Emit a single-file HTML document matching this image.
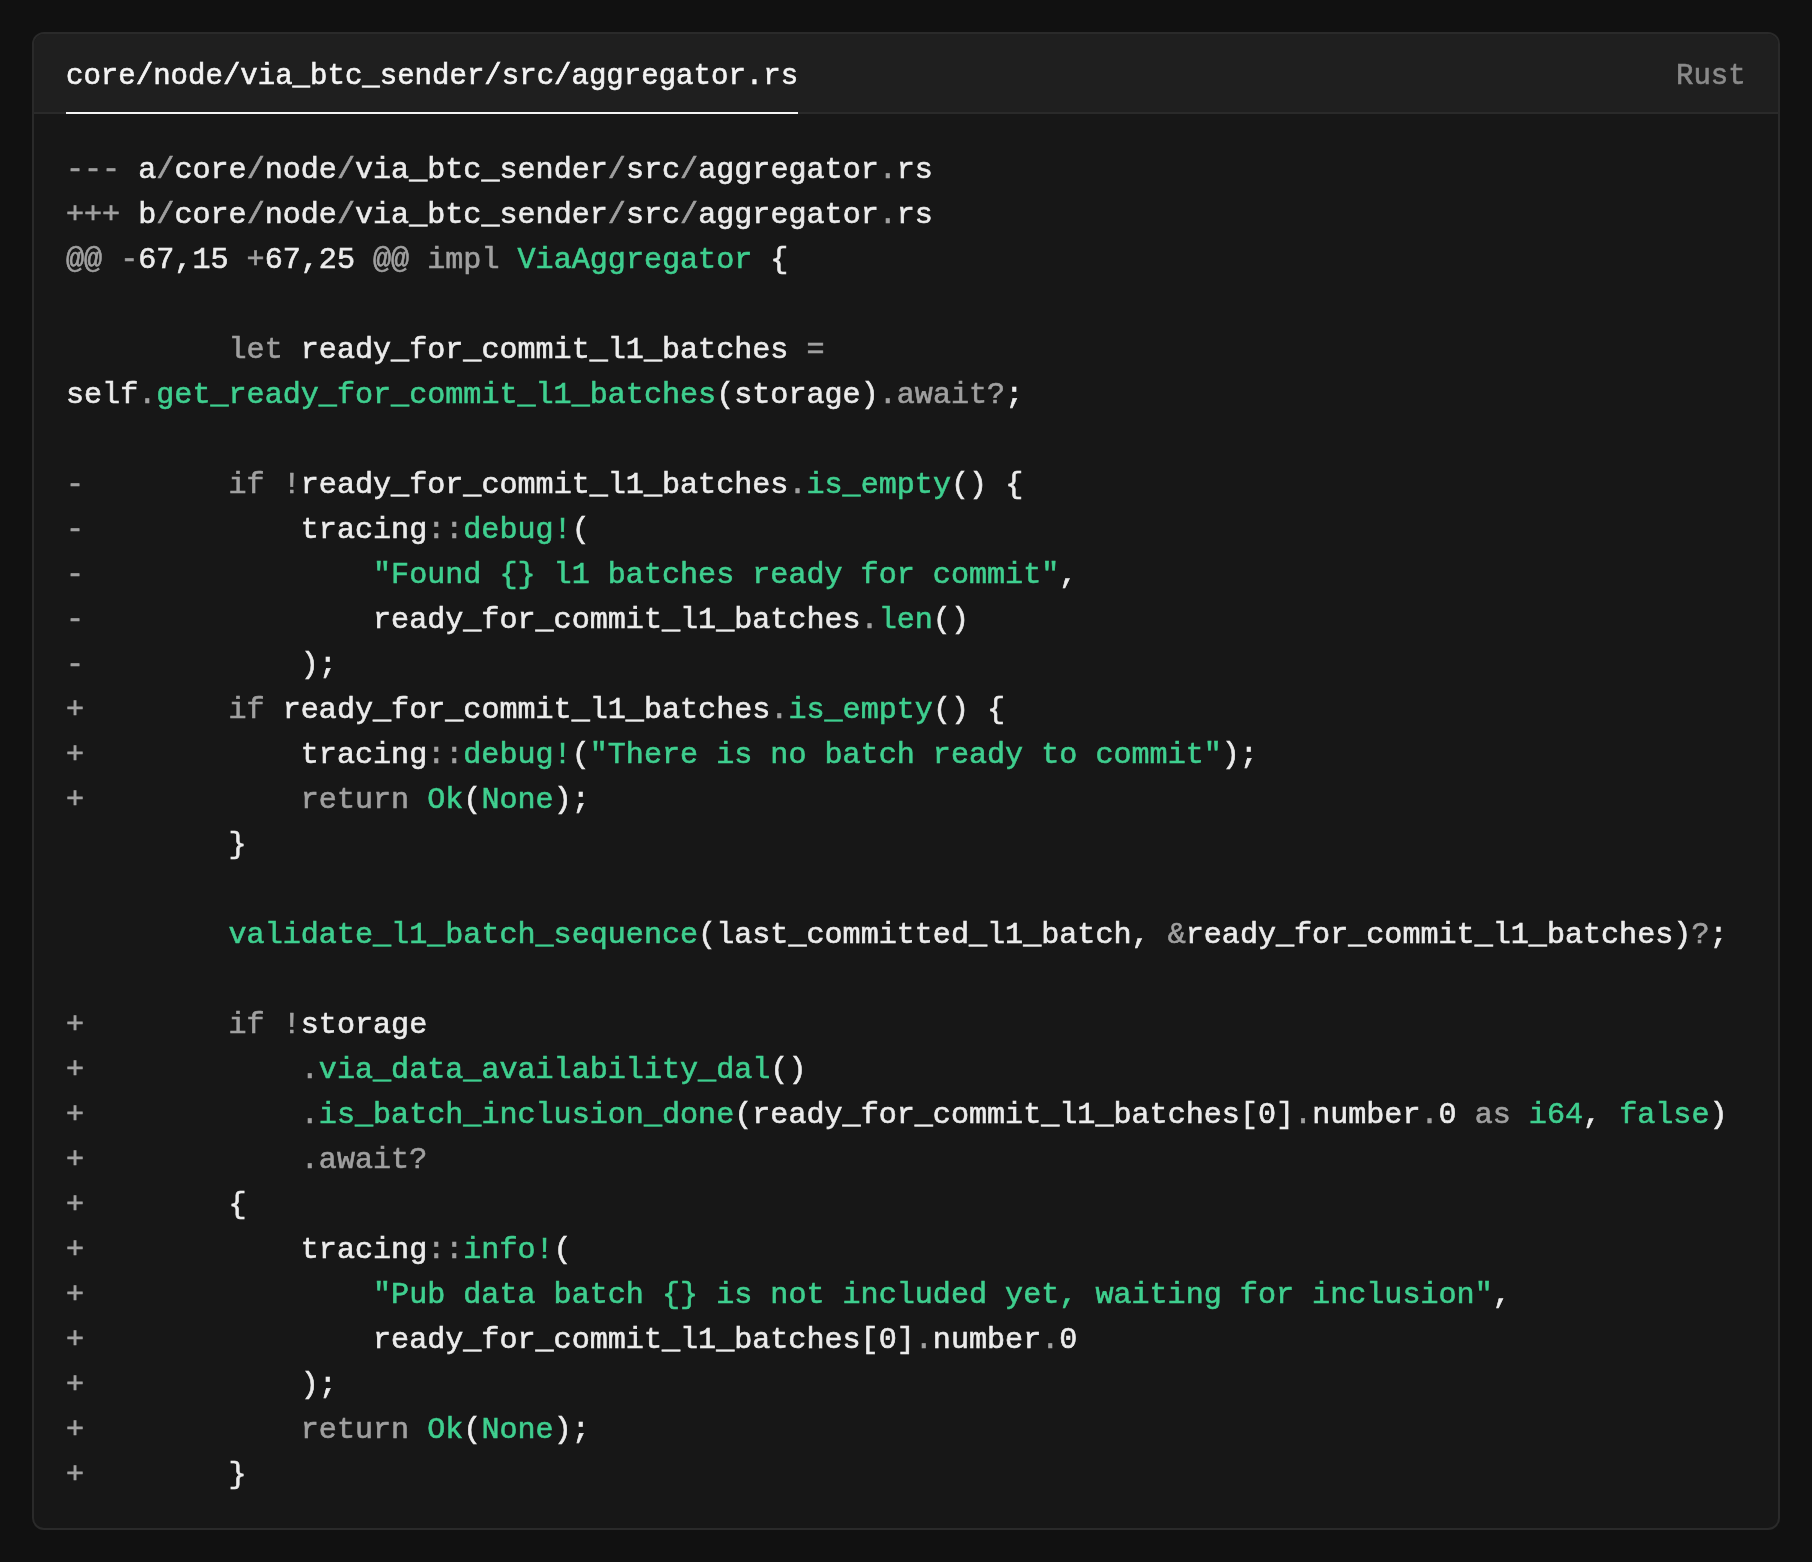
<!DOCTYPE html>
<html><head><meta charset="utf-8">
<style>
html,body{margin:0;padding:0;}
body{width:1812px;height:1562px;background:#111111;position:relative;overflow:hidden;font-family:"Liberation Mono",monospace;}
.box{position:absolute;left:32px;top:32px;width:1744px;height:1494px;border:2px solid #2a2a2a;border-radius:12px;background:#171717;overflow:hidden;}
.hd{position:absolute;left:0;top:0;width:1744px;height:78px;background:#1f1f1f;border-bottom:2px solid #2a2a2a;}
.tab{will-change:transform;-webkit-text-stroke:0.6px;position:absolute;left:32px;top:4px;height:78px;line-height:78px;font-size:29.05px;color:#f4f4f4;white-space:pre;}
.ul{position:absolute;left:32px;top:78px;width:732px;height:2px;background:#f4f4f4;}
.lang{will-change:transform;-webkit-text-stroke:0.6px;position:absolute;right:32px;top:4px;height:78px;line-height:78px;font-size:29px;color:#8a8a8a;}
.code{will-change:transform;-webkit-text-stroke:0.6px;position:absolute;left:32px;top:114px;font-size:30.1px;line-height:45px;color:#ececec;}
.l{height:45px;white-space:pre;}
.g{color:#a0a0a0}
.k{color:#a0a0a0}
.m{color:#a0a0a0}
.s{color:#3fcf8f}
</style></head><body>
<div class="box">
<div class="hd"></div>
<div class="tab">core/node/via_btc_sender/src/aggregator.rs</div>
<div class="ul"></div>
<div class="lang">Rust</div>
<div class="code">
<div class="l"><span class="m">---</span> a<span class="g">/</span>core<span class="g">/</span>node<span class="g">/</span>via_btc_sender<span class="g">/</span>src<span class="g">/</span>aggregator<span class="g">.</span>rs</div>
<div class="l"><span class="m">+++</span> b<span class="g">/</span>core<span class="g">/</span>node<span class="g">/</span>via_btc_sender<span class="g">/</span>src<span class="g">/</span>aggregator<span class="g">.</span>rs</div>
<div class="l"><span class="m">@@</span> <span class="g">-</span>67,15 <span class="g">+</span>67,25 <span class="m">@@</span> <span class="k">impl</span> <span class="s">ViaAggregator</span> {</div>
<div class="l"> </div>
<div class="l">         <span class="k">let</span> ready_for_commit_l1_batches <span class="g">=</span></div>
<div class="l">self<span class="g">.</span><span class="s">get_ready_for_commit_l1_batches</span>(storage)<span class="g">.</span><span class="k">await</span><span class="g">?</span>;</div>
<div class="l"> </div>
<div class="l"><span class="m">-</span>        <span class="k">if</span> <span class="g">!</span>ready_for_commit_l1_batches<span class="g">.</span><span class="s">is_empty</span>() {</div>
<div class="l"><span class="m">-</span>            tracing<span class="g">::</span><span class="s">debug!</span>(</div>
<div class="l"><span class="m">-</span>                <span class="s">"Found {} l1 batches ready for commit"</span>,</div>
<div class="l"><span class="m">-</span>                ready_for_commit_l1_batches<span class="g">.</span><span class="s">len</span>()</div>
<div class="l"><span class="m">-</span>            );</div>
<div class="l"><span class="m">+</span>        <span class="k">if</span> ready_for_commit_l1_batches<span class="g">.</span><span class="s">is_empty</span>() {</div>
<div class="l"><span class="m">+</span>            tracing<span class="g">::</span><span class="s">debug!</span>(<span class="s">"There is no batch ready to commit"</span>);</div>
<div class="l"><span class="m">+</span>            <span class="k">return</span> <span class="s">Ok</span>(<span class="s">None</span>);</div>
<div class="l">         }</div>
<div class="l"> </div>
<div class="l">         <span class="s">validate_l1_batch_sequence</span>(last_committed_l1_batch, <span class="g">&amp;</span>ready_for_commit_l1_batches)<span class="g">?</span>;</div>
<div class="l"> </div>
<div class="l"><span class="m">+</span>        <span class="k">if</span> <span class="g">!</span>storage</div>
<div class="l"><span class="m">+</span>            <span class="g">.</span><span class="s">via_data_availability_dal</span>()</div>
<div class="l"><span class="m">+</span>            <span class="g">.</span><span class="s">is_batch_inclusion_done</span>(ready_for_commit_l1_batches[0]<span class="g">.</span>number<span class="g">.</span>0 <span class="k">as</span> <span class="s">i64</span>, <span class="s">false</span>)</div>
<div class="l"><span class="m">+</span>            <span class="g">.</span><span class="k">await</span><span class="g">?</span></div>
<div class="l"><span class="m">+</span>        {</div>
<div class="l"><span class="m">+</span>            tracing<span class="g">::</span><span class="s">info!</span>(</div>
<div class="l"><span class="m">+</span>                <span class="s">"Pub data batch {} is not included yet, waiting for inclusion"</span>,</div>
<div class="l"><span class="m">+</span>                ready_for_commit_l1_batches[0]<span class="g">.</span>number<span class="g">.</span>0</div>
<div class="l"><span class="m">+</span>            );</div>
<div class="l"><span class="m">+</span>            <span class="k">return</span> <span class="s">Ok</span>(<span class="s">None</span>);</div>
<div class="l"><span class="m">+</span>        }</div>
</div>
</div>
</body></html>
